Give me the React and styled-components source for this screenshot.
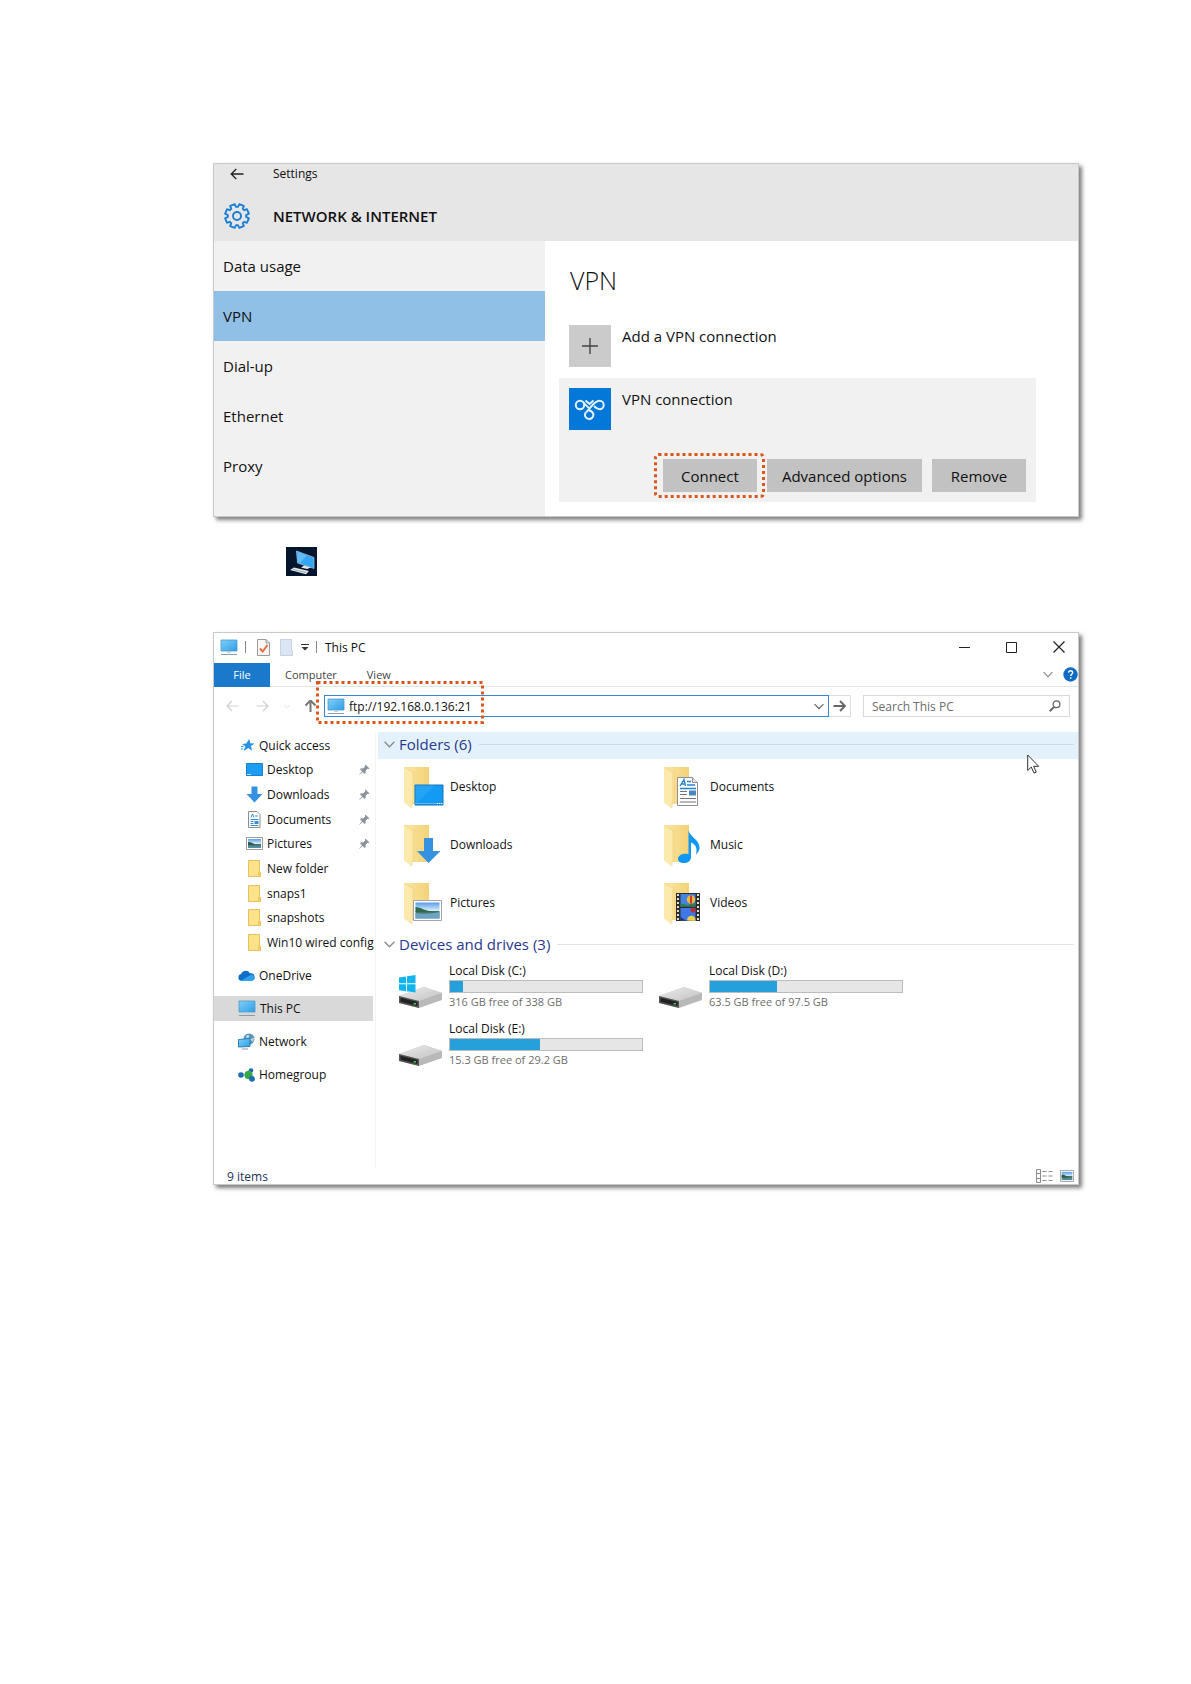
import React from "react";
import styled, { createGlobalStyle } from "styled-components";

const GlobalStyle = createGlobalStyle`
  *, *::before, *::after { box-sizing: border-box; }
  body {
    margin: 0;
    background: #fff;
    color: #111;
    font-family: "Open Sans", "Noto Sans", sans-serif;
  }
  button, input { font-family: inherit; }
  h1, h2, p, ul { margin: 0; padding: 0; }
  ul { list-style: none; }
  svg { display: block; flex: none; }
`;

/* ---------- shared ---------- */

const Page = styled.main`
  padding: 163px 112px 163px 213px;
`;

const Window = styled.section`
  position: relative;
  background: #fff;
  border: 1px solid #c9c9c9;
  box-shadow: 3px 3px 4px rgba(0, 0, 0, 0.5);
`;

const IconLine = styled.p`
  padding: 30px 73px 56px;
`;

const PlainButton = styled.button`
  display: flex;
  align-items: center;
  justify-content: center;
  padding: 0;
  border: 0;
  background: none;
  color: inherit;
`;

const MarkFrame = styled.svg`
  position: absolute;
  top: ${(p) => p.$top}px;
  left: ${(p) => p.$left}px;
  width: calc(100% + ${(p) => p.$growX}px);
  height: calc(100% + ${(p) => p.$growY}px);
  pointer-events: none;
  overflow: visible;
  z-index: 2;

  rect {
    width: calc(100% - 3px);
    height: calc(100% - 3px);
    fill: none;
    stroke: #d9571a;
    stroke-width: 3;
    stroke-dasharray: 3 3;
  }
`;

function Mark({ top, left, growX, growY, radius = 0 }) {
  return (
    <MarkFrame $top={top} $left={left} $growX={growX} $growY={growY} aria-hidden="true">
      <rect x="1.5" y="1.5" rx={radius} />
    </MarkFrame>
  );
}

/* ---------- settings window ---------- */

const SettingsHeader = styled.header`
  background: #e6e6e6;
  height: 77px;
  padding-left: 10px;
`;

const HeaderRow = styled.div`
  display: grid;
  grid-template-columns: 26px 1fr;
  column-gap: 23px;
  align-items: center;
  justify-items: start;
  height: ${(p) => p.$height}px;
`;

const BackButton = styled(PlainButton)`
  width: 26px;
  height: 20px;
`;

const WindowName = styled.span`
  font-size: 12px;
  line-height: 20px;
`;

const SettingsTitle = styled.h1`
  font-size: 15px;
  line-height: 20px;
  font-weight: 600;
`;

const SettingsBody = styled.div`
  display: flex;
`;

const SettingsNav = styled.nav`
  flex: 0 0 331px;
  background: #f1f1f1;
`;

const SettingsLink = styled.a`
  display: flex;
  align-items: center;
  height: 50px;
  padding-left: 9px;
  font-size: 15px;
  color: #111;
  text-decoration: none;
  background: ${(p) => (p.$active ? "#91c0e6" : "transparent")};
`;

const SettingsMain = styled.div`
  flex: 1;
  min-width: 0;
  padding: 22px 42px 14px 14px;
`;

const VpnHeading = styled.h2`
  padding-left: 11px;
  font-size: 25px;
  line-height: 34px;
  font-weight: 300;
`;

const VpnRow = styled(PlainButton)`
  justify-content: flex-start;
  align-items: flex-start;
  gap: 11px;
  font-size: 15px;
  line-height: 22px;
  color: #111;
`;

const AddRow = styled(VpnRow)`
  margin: 28px 0 11px 10px;
`;

const Tile = styled.span`
  display: flex;
  align-items: center;
  justify-content: center;
  width: 42px;
  height: 42px;
  background: ${(p) => p.$color};
`;

const VpnCard = styled.div`
  background: #f1f1f1;
  padding: 10px;
`;

const CardActions = styled.div`
  display: flex;
  justify-content: flex-end;
  gap: 10px;
  margin-top: 29px;
`;

const ActionSlot = styled.div`
  position: relative;
`;

const ActionButton = styled.button`
  display: block;
  min-width: 94px;
  height: 33px;
  padding: 0 15px;
  border: 0;
  background: #c2c2c2;
  color: #111;
  font-size: 15px;
`;

const BackArrow = () => (
  <svg width="14" height="12" viewBox="0 0 14 12" fill="none" stroke="#222" strokeWidth="1.3">
    <path d="M13.5 6H1.2M6.3 1L1.2 6l5.1 5" />
  </svg>
);

const gearPath = (() => {
  const pts = [];
  const teeth = 8;
  for (let i = 0; i < teeth; i += 1) {
    const mid = (i + 0.5) * ((Math.PI * 2) / teeth);
    [[-0.29, 9.2], [-0.2, 12.1], [0.2, 12.1], [0.29, 9.2]].forEach(([da, r]) => {
      pts.push(`${(13 + r * Math.sin(mid + da)).toFixed(2)} ${(13 - r * Math.cos(mid + da)).toFixed(2)}`);
    });
  }
  return `M${pts.join("L")}Z`;
})();

const Gear = () => (
  <svg width="26" height="26" viewBox="0 0 26 26" fill="none" stroke="#1b7fd6" strokeWidth="1.9" strokeLinejoin="round">
    <path d={gearPath} />
    <circle cx="13" cy="13" r="4" />
  </svg>
);

const Plus = () => (
  <svg width="18" height="18" viewBox="0 0 18 18" stroke="#444" strokeWidth="1.4">
    <path d="M9 1v16M1 9h16" />
  </svg>
);

const VpnGlyph = () => (
  <svg width="32" height="24" viewBox="0 0 32 24" fill="none" stroke="#e6f3ff" strokeWidth="2">
    <circle cx="6" cy="8" r="4.2" />
    <path d="M9.500 5.500C11.500 8 13 9.500 15 11M11.500 3.500L15.500 7l4-3.500" />
    <path d="M12 15.500C17 11 20 3.800 25.500 3.800a4.200 4.200 0 0 1 0 8.400C22.800 12.200 21.500 10.500 20 9" />
    <path d="M15 13.600a4.200 4.200 0 1 1-3.200 1.700M15 13.600c2 .300 3 1 4 2.500" />
  </svg>
);

const NAV = ["Data usage", "VPN", "Dial-up", "Ethernet", "Proxy"];

function SettingsWindow() {
  return (
    <Window aria-label="Settings">
      <SettingsHeader>
        <HeaderRow $height={20}>
          <BackButton type="button" aria-label="Back"><BackArrow /></BackButton>
          <WindowName>Settings</WindowName>
        </HeaderRow>
        <HeaderRow $height={64}>
          <Gear />
          <SettingsTitle>NETWORK &amp; INTERNET</SettingsTitle>
        </HeaderRow>
      </SettingsHeader>
      <SettingsBody>
        <SettingsNav>
          {NAV.map((name) => (
            <SettingsLink key={name} href="#" $active={name === "VPN"}>{name}</SettingsLink>
          ))}
        </SettingsNav>
        <SettingsMain>
          <VpnHeading>VPN</VpnHeading>
          <AddRow type="button">
            <Tile $color="#cbcbcb"><Plus /></Tile>
            Add a VPN connection
          </AddRow>
          <VpnCard>
            <VpnRow type="button">
              <Tile $color="#0478d8"><VpnGlyph /></Tile>
              VPN connection
            </VpnRow>
            <CardActions>
              <ActionSlot>
                <ActionButton type="button">Connect</ActionButton>
                <Mark top={-6} left={-9} growX={17} growY={12} radius={3} />
              </ActionSlot>
              <ActionButton type="button">Advanced options</ActionButton>
              <ActionButton type="button">Remove</ActionButton>
            </CardActions>
          </VpnCard>
        </SettingsMain>
      </SettingsBody>
    </Window>
  );
}

/* ---------- explorer window ---------- */

const TitleBar = styled.div`
  display: flex;
  align-items: center;
  height: 30px;
  padding: 0 13px 2px 6px;
  font-size: 12px;
`;

const QuickTools = styled.div`
  display: flex;
  align-items: center;
  flex: 1;
`;

const Divider = styled.span`
  width: 1px;
  height: 12px;
  margin: ${(p) => p.$margin};
  background: #888;
`;

const ToolButton = styled(PlainButton)`
  margin-right: ${(p) => p.$after || 0}px;
`;

const Controls = styled.div`
  display: flex;
  align-items: center;
  gap: 36px;
`;

const RibbonTabs = styled.div`
  display: flex;
  align-items: center;
  height: 24px;
  border-bottom: 1px solid #e4e4e4;
`;

const Tab = styled(PlainButton)`
  height: 24px;
  margin-right: ${(p) => p.$after}px;
  font-size: 11px;
  color: #444;
`;

const FileTab = styled(Tab)`
  width: 56px;
  background: #1a79ca;
  color: #fff;
`;

const RibbonEnd = styled.div`
  display: flex;
  align-items: center;
  gap: 10px;
  margin-left: auto;
`;

const AddressRow = styled.div`
  display: flex;
  align-items: center;
  padding: 8px 8px 15px 12px;
`;

const AddressBox = styled.div`
  position: relative;
  display: flex;
  align-items: center;
  flex: 1;
  height: 22px;
  padding: 0 4px 0 2px;
  border: 1px solid #3487d8;
`;

const MarkedPart = styled.label`
  position: relative;
  display: flex;
  align-items: center;
  width: 144px;
  height: 20px;
  gap: 4px;
`;

const FieldInput = styled.input`
  flex: 1;
  width: 100%;
  min-width: 0;
  height: 20px;
  padding: 0;
  border: 0;
  outline: 0;
  background: none;
  color: #111;
  font-size: 12px;

  &::placeholder { color: #6d6d6d; opacity: 1; }
`;

const OpenList = styled(PlainButton)`
  margin-left: auto;
`;

const GoButton = styled(PlainButton)`
  width: 22px;
  height: 22px;
  margin-right: 12px;
  border: 1px solid #dcdcdc;
  border-left: 0;
`;

const SearchBox = styled.label`
  display: flex;
  align-items: center;
  width: 207px;
  height: 22px;
  padding: 0 8px;
  border: 1px solid #d9d9d9;
`;

const ExplorerBody = styled.div`
  display: flex;
  min-height: 436px;
`;

const Side = styled.nav`
  flex: 0 0 162px;
  min-width: 0;
  border-right: 1px solid #f4f4f4;
  padding: 1px 2px 0 0;
`;

const QuickList = styled.ul`
  display: grid;
  grid-template-columns: minmax(0, 1fr);
  grid-auto-rows: 1fr;
  min-height: 222px;
`;

const PlaceList = styled.ul`
  display: grid;
  gap: 8px;
  padding-top: 8px;
`;

const SideLink = styled.a`
  display: flex;
  align-items: center;
  height: 100%;
  min-height: ${(p) => (p.$tall ? 25 : 24)}px;
  padding-left: ${(p) => (p.$nested ? 32 : 24)}px;
  padding-right: 3px;
  gap: 4px;
  background: ${(p) => (p.$active ? "#d9d9d9" : "transparent")};
  color: #111;
  font-size: 12px;
  text-decoration: none;
  white-space: nowrap;
`;

const IconSlot = styled.span`
  display: flex;
  justify-content: flex-end;
  width: 17px;
`;

const LinkText = styled.span`
  flex: 1;
  min-width: 0;
`;

const Content = styled.div`
  flex: 1;
  min-width: 0;
  padding-left: 2px;
`;

const GroupHeader = styled.h2`
  display: flex;
  align-items: center;
  height: 27px;
  padding: 0 4px 3px 6px;
  background: ${(p) => (p.$hover ? "#e3f1fc" : "transparent")};
  color: #27398c;
  font-size: 15px;
  font-weight: 400;

  svg { margin-right: 4px; }
  &::after {
    content: "";
    flex: 1;
    height: 1px;
    margin-left: 7px;
    background: ${(p) => (p.$hover ? "#cadae8" : "#e2e2e2")};
  }
`;

const ItemGrid = styled.ul`
  display: grid;
  grid-template-columns: repeat(2, 260px);
  row-gap: 16px;
  padding: ${(p) => p.$padding};
`;

const FolderItem = styled.li`
  display: flex;
  align-items: flex-start;
  gap: 5px;
  height: 42px;
  font-size: 12px;
  line-height: 40px;
`;

const DriveItem = styled.li`
  display: flex;
  align-items: flex-start;
  gap: 6px;
  height: 42px;
  font-size: 12px;
  line-height: 16px;

  svg { margin-top: 12px; }
`;

const DriveInfo = styled.div`
  width: 194px;
`;

const Meter = styled.div`
  height: 13px;
  margin: 1px 0;
  border: 1px solid #bcbcbc;
  background: #e6e6e6;
`;

const MeterFill = styled.div`
  height: 100%;
  background: #26a0da;
`;

const FreeSpace = styled.p`
  color: #6d6d6d;
  font-size: 11px;
`;

const StatusBar = styled.footer`
  display: flex;
  align-items: center;
  justify-content: space-between;
  height: 16px;
  padding: 0 4px 0 13px;
  color: #1e3358;
  font-size: 12px;
`;

const ViewButtons = styled.div`
  display: flex;
  gap: 7px;
`;

const Pointer = styled.svg`
  position: absolute;
  top: 121px;
  right: 38px;
`;

/* ---------- explorer drawings ---------- */

const HiddenDefs = styled.svg`
  position: absolute;
`;

const Gradients = () => (
  <HiddenDefs width="0" height="0" aria-hidden="true">
    <defs>
      <linearGradient id="screen" x1="0" y1="0" x2="1" y2="1">
        <stop offset="0" stopColor="#7fd0f8" /><stop offset="1" stopColor="#2f9ee6" />
      </linearGradient>
      <linearGradient id="folder" x1="0" y1="0" x2="1" y2="0">
        <stop offset="0" stopColor="#fbe6a0" /><stop offset="1" stopColor="#f3d278" />
      </linearGradient>
      <linearGradient id="photo" x1="0" y1="0" x2="0" y2="1">
        <stop offset="0" stopColor="#5a9be8" /><stop offset="0.5" stopColor="#d4ebfa" />
        <stop offset="0.52" stopColor="#3f6f52" /><stop offset="1" stopColor="#5b94b6" />
      </linearGradient>
      <linearGradient id="metal" x1="0" y1="0" x2="1" y2="1">
        <stop offset="0" stopColor="#ececec" /><stop offset="1" stopColor="#c2c2c2" />
      </linearGradient>
    </defs>
  </HiddenDefs>
);

const Monitor = () => (
  <svg width="18" height="17" viewBox="0 0 18 17">
    <path d="M1 1h16v11H1z" fill="url(#screen)" stroke="#4c9ac6" strokeWidth="0.8" />
    <path d="M7 12.500h4v1.500H7z" fill="#b9d3e2" />
    <path d="M1 15.500h16" stroke="#8a9aa6" />
  </svg>
);

const Check = () => (
  <svg width="13" height="17" viewBox="0 0 13 17">
    <path d="M.5.500h8.500l3.500 3.500v12.500H.500z" fill="#f8f6f4" stroke="#9a9a9a" />
    <path d="M9 .500v3.500h3.500" fill="none" stroke="#9a9a9a" />
    <path d="M3 9.500l2.700 3L10.500 6" fill="none" stroke="#e46a3c" strokeWidth="1.900" />
  </svg>
);

const Sheet = () => (
  <svg width="13" height="17" viewBox="0 0 13 17">
    <path d="M.5.500h11V11l1 1v4.500H.500z" fill="#dce5f4" stroke="#c6d1e4" />
  </svg>
);

const DropMark = () => (
  <svg width="8" height="8" viewBox="0 0 8 8"><path d="M0 1.500h8" stroke="#333" /><path d="M.5 4h7L4 7.500z" fill="#333" /></svg>
);

const Chevron = ({ color = "#8a8a8a", width = 11 }) => (
  <svg width={width} height="7" viewBox="0 0 11 7" fill="none" stroke={color} strokeWidth="1.3"><path d="M.6.800l4.900 5 4.900-5" /></svg>
);

const Arrow = ({ dir, color, width = 1.2 }) => (
  <svg width="13" height="12" viewBox="0 0 13 12" fill="none" stroke={color} strokeWidth={width}>
    <path d="M.5 6H12M7 1l5 5-5 5" transform={dir === "left" ? "rotate(180 6.500 6)" : dir === "up" ? "rotate(-90 6.500 6)" : undefined} />
  </svg>
);

const Star = () => (
  <svg width="14" height="13" viewBox="0 0 14 13">
    <path d="M8.200 0l1.200 4.200 4.200.300-3.600 2.500.900 4.700-3.600-2.600L2.700 12l1.600-4.700L1 4.900l4.300-.500z" fill="#2793e2" />
    <path d="M0 7.500h2.500M0 10h2.200" stroke="#2793e2" />
  </svg>
);

const DesktopSmall = () => (
  <svg width="17" height="13" viewBox="0 0 17 13"><path d="M.5.500h16v12H.500z" fill="#1d9df2" stroke="#1b7fca" /><path d="M1 11.500h4" stroke="#bfe3fb" /></svg>
);

const Down = () => (
  <svg width="17" height="17" viewBox="0 0 17 17"><path d="M5.500.500h6V8h5l-8 8.500L.500 8h5z" fill="#3592e0" /></svg>
);

const DocSmall = () => (
  <svg width="17" height="17" viewBox="0 0 17 17">
    <path d="M2.500.500h8.500l3 3v13H2.500z" fill="#fff" stroke="#8d8d8d" />
    <path d="M5 6.500l1.500-3.500L8 6.500M9 5h3M4.500 8.500h8M4.500 10.500h3M4.500 12.500h3M4.500 14.500h8" fill="none" stroke="#3a8ed0" />
    <path d="M8.500 10h4v3h-4z" fill="#3a8ed0" />
  </svg>
);

const PhotoSmall = ({ width = 17, height = 13 }) => (
  <svg width={width} height={height} viewBox="0 0 17 13" preserveAspectRatio="none">
    <path d="M.5.500h16v12H.500z" fill="#fff" stroke="#9b9b9b" />
    <path d="M2 2h13v9H2z" fill="url(#photo)" />
    <path d="M2 5c4 0 6 2.500 9 3H2z" fill="#2c5a4c" />
  </svg>
);

const FolderSmall = () => (
  <svg width="17" height="17" viewBox="0 0 17 17"><path d="M2.500.500h11v11l1 1v4H2.500z" fill="#fce38a" stroke="#e6c15c" /><path d="M12 11.500h2v5h-2z" fill="#f1cb60" /></svg>
);

const Cloud = () => (
  <svg width="17" height="11" viewBox="0 0 17 11">
    <path d="M3.500 10.800A3.400 3.400 0 0 1 3 4.100 5 5 0 0 1 12 3.300a3.700 3.700 0 0 1 1.600 7.500z" fill="#0f6fc6" />
    <path d="M3 10.800L12.500 5a3 3 0 1 1 .800 5.800z" fill="#2fa3ee" />
  </svg>
);

const NetworkIcon = () => (
  <svg width="17" height="17" viewBox="0 0 17 17">
    <circle cx="11" cy="6" r="5.500" fill="#5795b8" /><path d="M8 3c2-2 4-1 3 1S8 5 8 3zM12 6l4-1-1 4z" fill="#c4dce8" />
    <path d="M.5 6.500L12 5.500v8L.500 14z" fill="url(#screen)" stroke="#2c80b8" />
    <path d="M4 16h6" stroke="#8a9aa6" />
  </svg>
);

const HomegroupIcon = () => (
  <svg width="17" height="14" viewBox="0 0 17 14">
    <circle cx="3" cy="7" r="2.800" fill="#1c6bb3" /><circle cx="13" cy="2.500" r="2.300" fill="#1c6bb3" />
    <circle cx="10.500" cy="7" r="4.200" fill="#35a848" /><circle cx="14" cy="10.800" r="2.900" fill="#1c6bb3" />
  </svg>
);

const Pin = () => (
  <svg width="11" height="11" viewBox="0 0 11 11"><path d="M6.500.500L10.500 4.500 9.500 5 8.500 4.800 6.500 7l.200 2-1 1L3.600 8 .500 10.800l-.300-.300L3 7.300 1 5.200l1-1 2 .200L6.200 2.400 6 1.200z" fill="#8a929b" /></svg>
);

const Search = () => (
  <svg width="12" height="12" viewBox="0 0 12 12" fill="none" stroke="#666"><circle cx="7.500" cy="4.300" r="3.400" strokeWidth="1.300" /><path d="M5 7L.700 11.200" strokeWidth="1.900" /></svg>
);

const overlays = {
  Desktop: (
    <g><path d="M12 18h28v20H12z" fill="#139bf4" stroke="#1576b8" /><path d="M12.500 37L32 18.500H12.500z" fill="#33adfa" opacity=".5" /><path d="M12 36.500h28" stroke="#5fb9ee" /><path d="M34 36.500h5" stroke="#fff" strokeDasharray="1 1" /></g>
  ),
  Downloads: <path d="M21 13h9v13h7.500L25.500 38 14 26h7z" fill="#3592e0" />,
  Pictures: (
    <g><path d="M10.500 17.500h28v20h-28z" fill="#fff" stroke="#a2a2b2" /><path d="M12.500 19.500h24v16h-24z" fill="url(#photo)" /><path d="M12.500 24c5 0 9 4 19 5h-19z" fill="#2e6a4e" /><path d="M12.500 30c8 1 16 1 24-1v6.500h-24z" fill="#6fa3c4" /></g>
  ),
  Documents: (
    <g>
      <path d="M14.500 10.500h15l5 5v23h-20z" fill="#fdfdfd" stroke="#8e8e96" />
      <path d="M29.500 10.500v5h5" fill="#e7e7ea" stroke="#8e8e96" />
      <path d="M17 19l4-6.500L22.500 19M18.500 17h3.500M24 14.500h4M24 18h8M17 21.500h16" fill="none" stroke="#2484d4" strokeWidth="1.300" />
      <path d="M17 24.500h7M17 27.500h7M17 31.500h16M17 35h16" stroke="#777" />
      <path d="M26 23.500h7v5h-7z" fill="#4c86ba" />
    </g>
  ),
  Music: (
    <path d="M25.500 5c1 6.500 10.500 9.500 11 17 .200 3-1.500 6-3.500 7.500 1.500-6 0-10-5-12v15c0 3.500-3.500 5.500-7 5.500-3.500 0-6-1.500-6-4 0-4 5-6 10.500-5z" fill="#0f97f2" />
  ),
  Videos: (
    <g>
      <path d="M13 10h24v28H13z" fill="#2c2c2c" />
      <path d="M15 11v27M35 11v27" stroke="#e8e4cc" strokeWidth="2" strokeDasharray="2 2" />
      <path d="M17.500 11h15v12.500h-15z" fill="#4583e0" /><path d="M17.500 25h15v12.500h-15z" fill="#3f78e6" />
      <circle cx="28" cy="16.500" r="4.200" fill="#f0b93a" /><path d="M27 12.500h2v8h-2z" fill="#c33b32" />
      <path d="M17.500 20.500l7 1.500 8-2v3.500h-15z" fill="#2c8046" /><circle cx="30" cy="27" r="2.500" fill="#bb2d36" />
      <path d="M24 37.500c0-6 8-6 8.500-1v1.500z" fill="#eed04a" /><path d="M17.500 34l5 3.500h-5z" fill="#1d3670" />
    </g>
  ),
};

const BigFolder = ({ name }) => (
  <svg width="42" height="42" viewBox="0 0 42 42">
    <path d="M1 0h25v37H9z" fill="url(#folder)" />
    <path d="M1 0l8 5v31.500l-.800 4.500L1 35.500z" fill="#fce9ac" />
    <path d="M1 0l8 5h2.500v31H9V41l-2-1.500" fill="none" stroke="#eed08a" strokeWidth=".6" />
    {overlays[name]}
  </svg>
);

const Drive = ({ system }) => (
  <svg width="45" height="34" viewBox="0 0 45 34">
    <path d="M1 21L26 12l18 6v7L21 33 1 28z" fill="#b9b9b9" />
    <path d="M1 21L26 12l18 6-23 8z" fill="url(#metal)" />
    <path d="M1 21l20 5v7L1 28z" fill="#555" />
    <path d="M2.500 22.800l17 4.300v4L2.500 26.800z" fill="#222" />
    <path d="M15.500 28h2.500v1.500h-2.500z" fill="#39d04a" />
    {system && (
      <g fill="#12b4f0"><path d="M1 2.500L8 1.500v6.800H1zM9 1.300l8.500-1.300v8.300H9zM1 9.300h7v6.900l-7-1zM9 9.300h8.500V17.500L9 16.300z" /></g>
    )}
  </svg>
);

const DarkPc = () => (
  <svg width="31" height="29" viewBox="0 0 31 29" role="img" aria-label="This PC">
    <path d="M0 0h31v29H0z" fill="#04152d" />
    <path d="M10.500 4l17.500 6.500v11L11.500 16z" fill="#35a4f2" stroke="#93bfdc" strokeWidth=".8" />
    <path d="M11.500 5l9 3.500-6 7.500-2.500-1z" fill="#62bcf7" />
    <path d="M18 18.500l7 2-4 1.500-6-1.500zM4 23l4-2.500 15 3.500-3 3.300z" fill="#dfe4e6" />
    <path d="M7 22.500l13 3" stroke="#8a949c" strokeWidth=".7" />
  </svg>
);

const QUICK = [
  { name: "Desktop", Icon: DesktopSmall, pinned: true },
  { name: "Downloads", Icon: Down, pinned: true },
  { name: "Documents", Icon: DocSmall, pinned: true },
  { name: "Pictures", Icon: PhotoSmall, pinned: true },
  { name: "New folder", Icon: FolderSmall },
  { name: "snaps1", Icon: FolderSmall },
  { name: "snapshots", Icon: FolderSmall },
  { name: "Win10 wired config", Icon: FolderSmall },
];

const PLACES = [
  { name: "OneDrive", Icon: Cloud },
  { name: "This PC", Icon: Monitor, active: true },
  { name: "Network", Icon: NetworkIcon },
  { name: "Homegroup", Icon: HomegroupIcon },
];

const FOLDERS = ["Desktop", "Documents", "Downloads", "Music", "Pictures", "Videos"];

const DRIVES = [
  { name: "Local Disk (C:)", free: "316 GB free of 338 GB", used: 7, system: true },
  { name: "Local Disk (D:)", free: "63.5 GB free of 97.5 GB", used: 35 },
  { name: "Local Disk (E:)", free: "15.3 GB free of 29.2 GB", used: 47 },
];

function ExplorerWindow() {
  return (
    <Window aria-label="This PC">
      <Gradients />
      <TitleBar>
        <QuickTools>
          <Monitor />
          <Divider $margin="0 11px 0 7px" />
          <ToolButton type="button" aria-label="Properties" $after={10}><Check /></ToolButton>
          <ToolButton type="button" aria-label="New folder" $after={8}><Sheet /></ToolButton>
          <ToolButton type="button" aria-label="Customize toolbar"><DropMark /></ToolButton>
          <Divider $margin="0 8px 0 7px" />
          This PC
        </QuickTools>
        <Controls>
          <PlainButton type="button" aria-label="Minimize">
            <svg width="11" height="11" viewBox="0 0 11 11" stroke="#222"><path d="M0 5.500h11" /></svg>
          </PlainButton>
          <PlainButton type="button" aria-label="Maximize">
            <svg width="11" height="11" viewBox="0 0 11 11" fill="none" stroke="#222"><path d="M.5.500h10v10H.500z" /></svg>
          </PlainButton>
          <PlainButton type="button" aria-label="Close">
            <svg width="12" height="12" viewBox="0 0 12 12" stroke="#222" strokeWidth="1.200"><path d="M.5.500l11 11M11.500.500l-11 11" /></svg>
          </PlainButton>
        </Controls>
      </TitleBar>
      <RibbonTabs>
        <FileTab type="button" $after={15}>File</FileTab>
        <Tab type="button" $after={30}>Computer</Tab>
        <Tab type="button" $after={0}>View</Tab>
        <RibbonEnd>
          <PlainButton type="button" aria-label="Expand ribbon"><Chevron width={10} /></PlainButton>
          <PlainButton type="button" aria-label="Help">
            <svg width="15" height="15" viewBox="0 0 15 15" fill="none">
              <circle cx="7.500" cy="7.500" r="7.200" fill="#0f6cc4" />
              <path d="M5.400 5.600c.200-2.600 4.300-2.400 4.300 0 0 1.600-2 1.700-2 3.400M7.700 10.300v1.500" stroke="#fff" strokeWidth="1.400" />
            </svg>
          </PlainButton>
        </RibbonEnd>
      </RibbonTabs>
      <AddressRow>
        <ToolButton type="button" aria-label="Back" $after={17}><Arrow dir="left" color="#cfcfcf" /></ToolButton>
        <ToolButton type="button" aria-label="Forward" $after={15}><Arrow color="#cfcfcf" /></ToolButton>
        <ToolButton type="button" aria-label="Recent" $after={14}><Chevron color="#d0d0d0" width={6} /></ToolButton>
        <ToolButton type="button" aria-label="Up" $after={7}><Arrow dir="up" color="#777" width={2} /></ToolButton>
        <AddressBox>
          <MarkedPart>
            <Monitor />
            <FieldInput type="text" aria-label="Address" defaultValue="ftp://192.168.0.136:21" />
            <Mark top={-15} left={-11} growX={24} growY={23} />
          </MarkedPart>
          <OpenList type="button" aria-label="Previous locations"><Chevron color="#666" width={10} /></OpenList>
        </AddressBox>
        <GoButton type="button" aria-label="Go"><Arrow color="#666" width={1.8} /></GoButton>
        <SearchBox>
          <FieldInput type="search" aria-label="Search" placeholder="Search This PC" />
          <Search />
        </SearchBox>
      </AddressRow>
      <ExplorerBody>
        <Side>
          <QuickList>
            <li><SideLink href="#"><IconSlot><Star /></IconSlot><LinkText>Quick access</LinkText></SideLink></li>
            {QUICK.map(({ name, Icon, pinned }) => (
              <li key={name}>
                <SideLink href="#" $nested><Icon /><LinkText>{name}</LinkText>{pinned && <Pin />}</SideLink>
              </li>
            ))}
          </QuickList>
          <PlaceList>
            {PLACES.map(({ name, Icon, active }) => (
              <li key={name}>
                <SideLink href="#" $tall $active={active}><Icon /><LinkText>{name}</LinkText></SideLink>
              </li>
            ))}
          </PlaceList>
        </Side>
        <Content>
          <GroupHeader $hover><Chevron />Folders (6)</GroupHeader>
          <ItemGrid $padding="8px 0 7px 25px">
            {FOLDERS.map((name) => (
              <FolderItem key={name}><BigFolder name={name} />{name}</FolderItem>
            ))}
          </ItemGrid>
          <GroupHeader><Chevron />Devices and drives (3)</GroupHeader>
          <ItemGrid $padding="4px 0 0 20px">
            {DRIVES.map((d) => (
              <DriveItem key={d.name}>
                <Drive system={d.system} />
                <DriveInfo>
                  <p>{d.name}</p>
                  <Meter><MeterFill style={{ width: `${d.used}%` }} /></Meter>
                  <FreeSpace>{d.free}</FreeSpace>
                </DriveInfo>
              </DriveItem>
            ))}
          </ItemGrid>
        </Content>
      </ExplorerBody>
      <StatusBar>
        <span>9 items</span>
        <ViewButtons>
          <PlainButton type="button" aria-label="Details view">
            <svg width="17" height="14" viewBox="0 0 17 14" fill="none" stroke="#8a8a8a">
              <path d="M.5.500h4v13h-4zM.5 4.500h4M.5 9.500h4" /><path d="M6.500 2.500h4M12.500 2.500h4M6.500 7h4M12.500 7h4M6.500 11.500h4M12.500 11.500h4" />
            </svg>
          </PlainButton>
          <PlainButton type="button" aria-label="Large icons view"><PhotoSmall width={14} height={12} /></PlainButton>
        </ViewButtons>
      </StatusBar>
      <Pointer width="13" height="20" viewBox="0 0 13 20" aria-hidden="true">
        <path d="M.7 1v15.500l3.600-3.400 2.700 6 2.300-1-2.600-5.800h5z" fill="#fff" stroke="#333" />
      </Pointer>
    </Window>
  );
}

export default function App() {
  return (
    <>
      <GlobalStyle />
      <Page>
        <SettingsWindow />
        <IconLine><DarkPc /></IconLine>
        <ExplorerWindow />
      </Page>
    </>
  );
}
